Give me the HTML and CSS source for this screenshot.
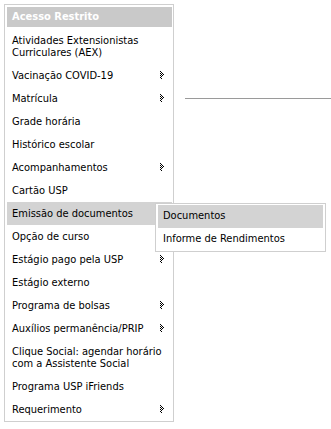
FILE: index.html
```html
<!DOCTYPE html>
<html lang="pt-BR">
<head>
    <meta charset="UTF-8">
    <meta name="viewport" content="width=device-width, initial-scale=1.0">
    <title>Acesso Restrito</title>
    <link rel="stylesheet" href="styles.css">
</head>
<body>
    <div class="page">
        <div class="menu">
            <div class="menu-title">Acesso Restrito</div>
            <ul class="menu-list">
                <li>Atividades Extensionistas Curriculares (AEX)</li>
                <li class="has-sub">Vacinação COVID-19</li>
                <li class="has-sub">Matrícula</li>
                <li>Grade horária</li>
                <li>Histórico escolar</li>
                <li class="has-sub">Acompanhamentos</li>
                <li>Cartão USP</li>
                <li class="has-sub active">Emissão de documentos
                    <ul class="submenu">
                        <li class="active">Documentos</li>
                        <li>Informe de Rendimentos</li>
                    </ul>
                </li>
                <li>Opção de curso</li>
                <li class="has-sub">Estágio pago pela USP</li>
                <li>Estágio externo</li>
                <li class="has-sub">Programa de bolsas</li>
                <li class="has-sub">Auxílios permanência/PRIP</li>
                <li>Clique Social: agendar horário com a Assistente Social</li>
                <li>Programa USP iFriends</li>
                <li class="has-sub">Requerimento</li>
            </ul>
        </div>
        <div class="main">
            <div class="main-rule"></div>
        </div>
    </div>
</body>
</html>
```

FILE: styles.css
```css
body {
    margin: 0;
    font-family: "DejaVu Sans", Verdana, sans-serif;
    font-stretch: condensed;
    font-size: 11px;
    color: #000;
    background: #fff;
    overflow: hidden;
}
.page {
    display: flex;
    align-items: flex-start;
    padding: 4px 0 0 4px;
}
.menu {
    width: 165px;
    padding: 2px 1px 0 2px;
    border: 1px solid #cfcfcf;
    flex-shrink: 0;
}
.menu-title {
    height: 20px;
    line-height: 20px;
    padding-left: 5px;
    background: #c9c9c9;
    color: #fff;
    font-weight: bold;
    margin-bottom: 2px;
}
.menu-list,
.submenu {
    list-style: none;
    margin: 0;
    padding: 0;
}
.menu-list > li {
    position: relative;
    line-height: 12px;
    padding: 5.5px 2px 5.5px 5px;
}
.menu-list > li.active {
    background: #d3d3d3;
}
/* seta pontilhada dos itens com submenu */
.menu-list > li.has-sub::after {
    content: "";
    position: absolute;
    right: 7px;
    top: 7px;
    width: 5px;
    height: 8px;
    background-image: url("data:image/svg+xml,%3Csvg xmlns='http://www.w3.org/2000/svg' width='5' height='8'%3E%3Cg fill='%23000'%3E%3Crect x='0' y='0' width='1' height='1'/%3E%3Crect x='0' y='2' width='1' height='1'/%3E%3Crect x='0' y='4' width='1' height='1'/%3E%3Crect x='0' y='6' width='1' height='1'/%3E%3Crect x='1' y='1' width='1' height='1'/%3E%3Crect x='1' y='3' width='1' height='1'/%3E%3Crect x='1' y='5' width='1' height='1'/%3E%3Crect x='1' y='7' width='1' height='1'/%3E%3Crect x='2' y='2' width='1' height='1'/%3E%3Crect x='2' y='4' width='1' height='1'/%3E%3Crect x='3' y='3' width='1' height='1'/%3E%3C/g%3E%3C/svg%3E");
}
.submenu {
    position: absolute;
    left: 148px;
    top: 1px;
    z-index: 2;
    width: 165px;
    padding: 1px 2px;
    background: #fff;
    border: 1px solid #cfcfcf;
}
.submenu li {
    line-height: 12px;
    padding: 5.25px 5px;
    white-space: nowrap;
}
.submenu li.active {
    background: #d3d3d3;
}
.main {
    flex: 1;
    margin-left: 11px;
    padding-top: 94px;
}
.main-rule {
    border-top: 1px solid #9a9a9a;
}
```
